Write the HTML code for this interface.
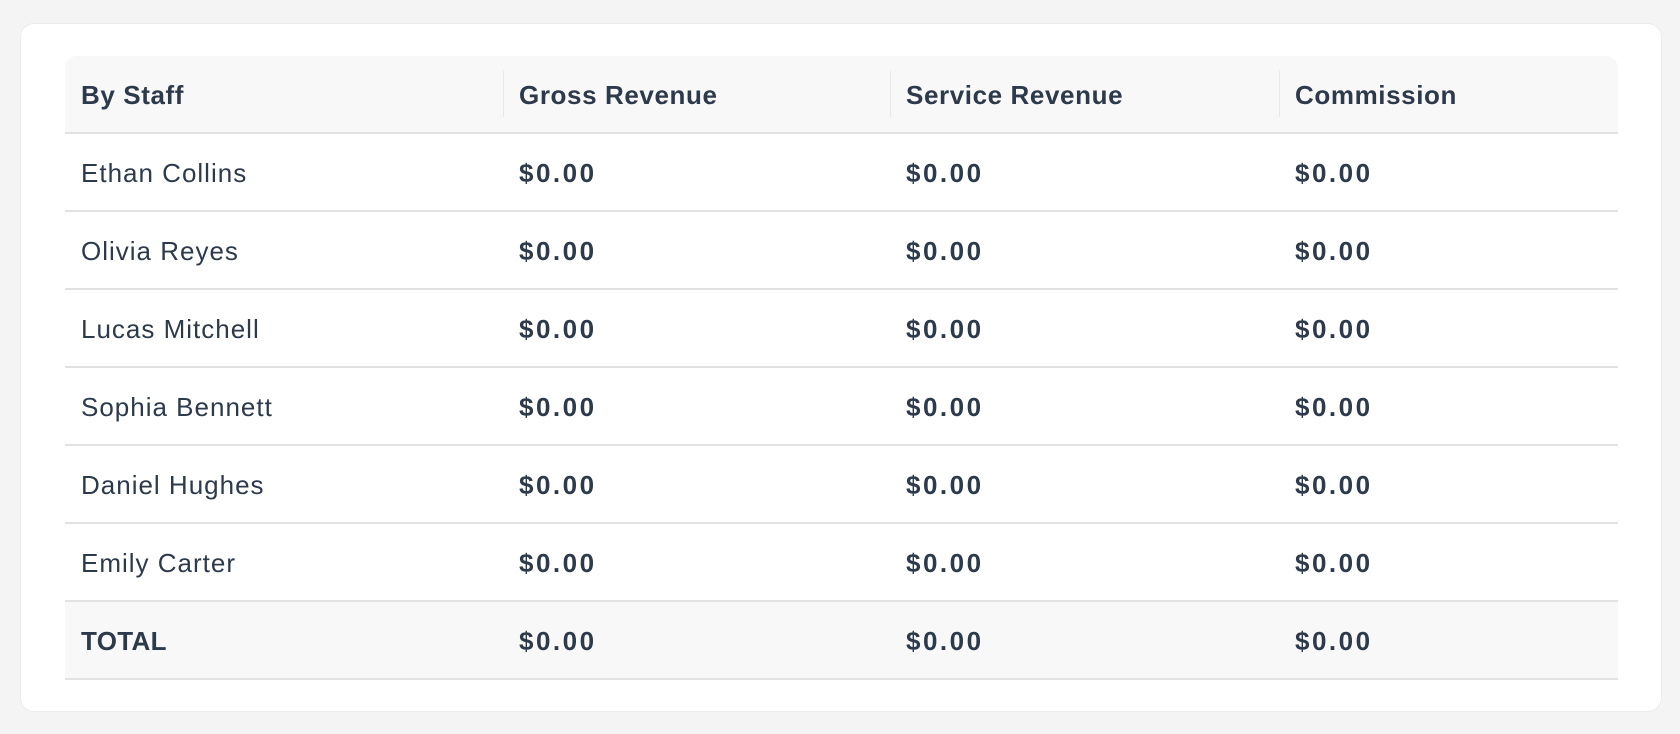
<!DOCTYPE html>
<html><head><style>
html,body{margin:0;padding:0;background:#f4f4f4;width:1680px;height:734px;overflow:hidden}
.card{position:absolute;left:20px;top:23px;width:1642px;height:689px;background:#fff;border-radius:14px;border:1px solid #ececec;box-sizing:border-box}
table{position:absolute;left:44px;top:32px;width:1553px;border-collapse:collapse;font-family:"Liberation Sans",sans-serif;color:#2d3a4b;font-size:26px}
th{background:#f8f8f8;text-align:left;font-weight:bold;height:77px;padding:2px 16px 0;position:relative;border-bottom:2px solid #e2e2e2;letter-spacing:0.6px;box-sizing:border-box}
th:first-child{border-top-left-radius:12px}
th:last-child{border-top-right-radius:12px}
th+th:before{content:"";position:absolute;left:0;top:15px;bottom:15px;width:1px;background:#e8e8e8}
td{height:74px;padding:2px 16px 0;border-bottom:2px solid #e2e2e2;letter-spacing:1px}
td+td{font-weight:bold;letter-spacing:2.5px}
tr.total td{background:#f8f8f8;font-weight:bold}
tr.total td:first-child{letter-spacing:0.3px}
</style></head><body>
<div class="card">
<table>
<colgroup><col style="width:438px"><col style="width:387px"><col style="width:389px"><col style="width:339px"></colgroup>
<tr><th>By Staff</th><th>Gross Revenue</th><th>Service Revenue</th><th>Commission</th></tr>
<tr><td>Ethan Collins</td><td>$0.00</td><td>$0.00</td><td>$0.00</td></tr>
<tr><td>Olivia Reyes</td><td>$0.00</td><td>$0.00</td><td>$0.00</td></tr>
<tr><td>Lucas Mitchell</td><td>$0.00</td><td>$0.00</td><td>$0.00</td></tr>
<tr><td>Sophia Bennett</td><td>$0.00</td><td>$0.00</td><td>$0.00</td></tr>
<tr><td>Daniel Hughes</td><td>$0.00</td><td>$0.00</td><td>$0.00</td></tr>
<tr><td>Emily Carter</td><td>$0.00</td><td>$0.00</td><td>$0.00</td></tr>
<tr class="total"><td>TOTAL</td><td>$0.00</td><td>$0.00</td><td>$0.00</td></tr>
</table>
</div>
</body></html>
